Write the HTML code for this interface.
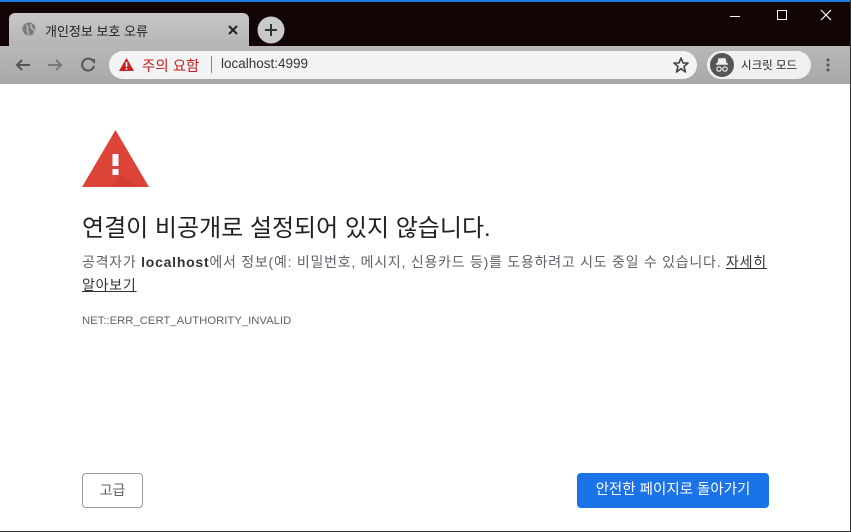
<!DOCTYPE html>
<html><head><meta charset="utf-8"><style>
*{margin:0;padding:0;box-sizing:border-box}
body{width:851px;height:532px;overflow:hidden;background:#fff;font-family:"Liberation Sans","Noto Sans CJK KR",sans-serif;position:relative}
.top{position:absolute;left:0;top:0;width:851px;height:2px;background:#1a7be0}
.title{position:absolute;left:0;top:2px;width:851px;height:45px;background:#120404}
.tab{position:absolute;left:9px;top:13px;width:240px;height:34px;background:linear-gradient(#c8c8c8,#b4b4b4);border-radius:6px 6px 0 0}
.toolbar{position:absolute;left:0;top:46px;width:851px;height:38px;background:linear-gradient(#b8b8b8,#a8a8a8)}
.omni{position:absolute;left:109px;top:51px;width:588px;height:28px;background:#f1f3f4;border-radius:14px}
.inc{position:absolute;left:707px;top:51px;width:104px;height:28px;background:#eef0f1;border-radius:14px}
.content{position:absolute;left:0;top:84px;width:850px;height:447px;background:#fff}
.rb{position:absolute;right:0;top:0;width:1px;height:532px;background:#333}
.bb{position:absolute;left:0;bottom:0;width:851px;height:1px;background:#333}
.t{position:absolute;white-space:nowrap}
</style></head><body>
<div class="top"></div>
<div class="title"></div>
<div class="tab"></div>
<svg class="t" style="left:22px;top:22px" width="14" height="14"><circle cx="7" cy="7" r="6.5" fill="#7a7a7a"/><path d="M4 3 Q7 5 5 8 Q7 10 6 13 M9 2 Q8 6 11 7 Q13 9 12 11" stroke="#b8b8b8" stroke-width="1.5" fill="none"/></svg>
<div class="t" style="left:45px;top:21px;font-size:13px;color:#222">개인정보 보호 오류</div>
<svg class="t" style="left:228px;top:25px" width="10" height="10"><path d="M1 1L9 9M9 1L1 9" stroke="#222" stroke-width="2"/></svg>
<svg class="t" style="left:257px;top:16px" width="28" height="28"><circle cx="14" cy="14" r="13.5" fill="#c9c9c9"/><path d="M14 8V20M8 14H20" stroke="#333" stroke-width="2"/></svg>
<svg class="t" style="left:728px;top:8px" width="110" height="16"><path d="M2 8.5H12" stroke="#fff"/><rect x="49.5" y="2.5" width="9" height="9" fill="none" stroke="#fff"/><path d="M93 2L103 12M103 2L93 12" stroke="#fff" stroke-width="1.2"/></svg>
<div class="toolbar"></div>
<svg class="t" style="left:14px;top:57px" width="90" height="16"><path d="M16 8H3M8 3L3 8L8 13" stroke="#555" stroke-width="2" fill="none"/><path d="M34 8H47M42 3L47 8L42 13" stroke="#777" stroke-width="2" fill="none"/><path d="M79 4A6 6 0 1 0 80 9" stroke="#555" stroke-width="2" fill="none"/><path d="M76 2H81V7Z" fill="#555"/></svg>
<div class="omni"></div>
<svg class="t" style="left:119px;top:58px" width="15" height="13"><path d="M7.5 0L15 13H0Z" fill="#c5221f"/><rect x="6.7" y="4" width="1.6" height="5" fill="#fff"/><rect x="6.7" y="10" width="1.6" height="1.6" fill="#fff"/></svg>
<div class="t" style="left:142px;top:55px;font-size:14.5px;color:#c5221f">주의 요함</div>
<div class="t" style="left:211px;top:56px;width:1px;height:17px;background:#888"></div>
<div class="t" style="left:221px;top:56px;font-size:13.5px;color:#333">localhost:4999</div>
<svg class="t" style="left:673px;top:57px" width="16" height="16"><path d="M8 1L10 6H15L11 9.5L12.5 15L8 11.7L3.5 15L5 9.5L1 6H6Z" fill="none" stroke="#444" stroke-width="1.6" stroke-linejoin="round"/></svg>
<div class="inc"></div>
<svg class="t" style="left:710px;top:53px" width="24" height="24"><circle cx="12" cy="12" r="12" fill="#555"/><path d="M6 11H18M8 11L9 6H15L16 11" stroke="#eee" stroke-width="1.5" fill="#eee"/><circle cx="9" cy="16" r="2.2" fill="none" stroke="#eee" stroke-width="1.2"/><circle cx="15" cy="16" r="2.2" fill="none" stroke="#eee" stroke-width="1.2"/></svg>
<div class="t" style="left:741px;top:57px;font-size:11.5px;color:#222">시크릿 모드</div>
<svg class="t" style="left:825px;top:58px" width="6" height="16"><circle cx="3" cy="2" r="1.5" fill="#555"/><circle cx="3" cy="7" r="1.5" fill="#555"/><circle cx="3" cy="12" r="1.5" fill="#555"/></svg>
<div class="content"></div>
<svg class="t" style="left:82px;top:130px" width="67" height="58"><path d="M33.5 0L67 57H0Z" fill="#db4437"/><path d="M38 45L58 57H30Z" fill="#c53a2e" opacity=".5"/><rect x="30.5" y="24" width="6" height="12" fill="#fff"/><rect x="30.5" y="39" width="6" height="6" fill="#fff"/></svg>
<div class="t" style="left:82px;top:208px;font-size:24px;color:#202124">연결이 비공개로 설정되어 있지 않습니다.</div>
<div class="t" style="left:82px;top:252px;font-size:14px;letter-spacing:0.75px;color:#5f6368">공격자가 <b style="color:#333">localhost</b>에서 정보(예: 비밀번호, 메시지, 신용카드 등)를 도용하려고 시도 중일 수 있습니다. <u style="color:#333">자세히</u></div>
<div class="t" style="left:82px;top:275px;font-size:14px;letter-spacing:0.75px;color:#333"><u>알아보기</u></div>
<div class="t" style="left:82px;top:315px;font-size:11.3px;color:#5f6368">NET::ERR_CERT_AUTHORITY_INVALID</div>
<div class="t" style="left:82px;top:473px;width:61px;height:35px;border:1px solid #999;border-radius:4px;font-size:14px;color:#5f6368;text-align:center;line-height:33px">고급</div>
<div class="t" style="left:577px;top:473px;width:192px;height:35px;background:#1a73e8;border-radius:4px;font-size:14.5px;color:#fff;text-align:center;line-height:35px">안전한 페이지로 돌아가기</div>
<div class="rb"></div><div class="bb"></div>
</body></html>
